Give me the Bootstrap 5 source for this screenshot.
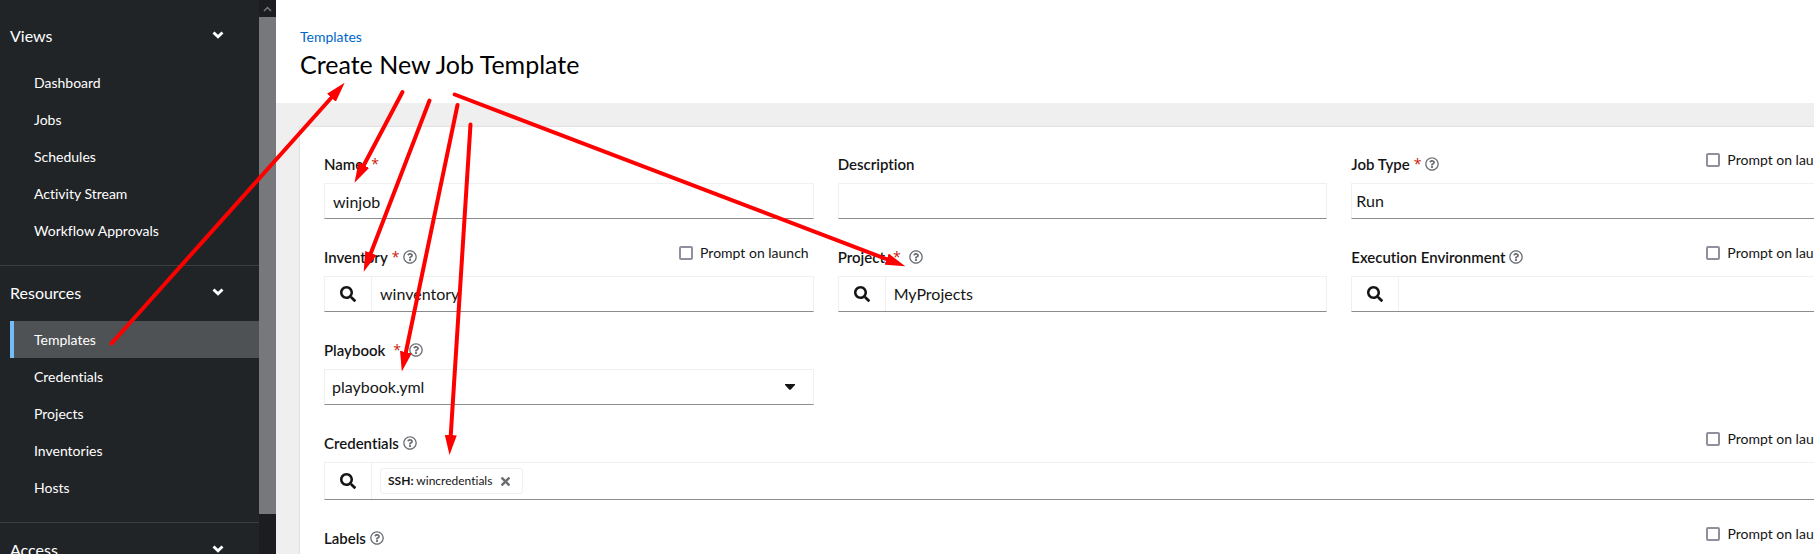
<!DOCTYPE html>
<html lang="en">
<head>
<meta charset="utf-8">
<meta name="viewport" content="width=device-width, initial-scale=1">
<title>Create New Job Template</title>
<link href="https://cdn.jsdelivr.net/npm/bootstrap@5.3.0/dist/css/bootstrap.min.css" rel="stylesheet">
<style>
body { font-family: Lato, "Open Sans", sans-serif; font-size: 14px; color: #151515; background: #fff; font-variant-ligatures: none; }
a { text-decoration: none; }
.icon { display: block; fill: currentColor; }

.sidebar { width: 259px; background: #212427; padding-top: 9px; }
.section { border-bottom: 1px solid #3c3f42; padding-bottom: 16px; }
.section-toggle { height: 55px; padding: 0 35px 2px 10px; font-size: 16px; color: #fff; background: none; border: 0; }
.section-toggle .icon { margin-bottom: 2px; }
.sidebar .nav-link { margin-left: 10px; padding: 0 0 0 24px; line-height: 37px; color: #fff; }
.sidebar .nav-link.active { background: #4f5255; border-left: 4px solid #73bcf7; padding-left: 20px; }

.scroller { width: 17px; background: #1b1d21; }
.scroller-up { height: 17px; color: #77787b; }
.scroller-thumb { height: calc(90% - 2px); background: #77787b; }

.page { margin-right: -75px; }
.page-head { padding: 26px 24px 23px; background: #fff; }
.crumb { line-height: 22px; color: #06c; }
.page-head h1 { font-size: 25px; line-height: 32px; font-weight: 400; color: #000; }
.page-body { background: #efefef; padding: 24px 24px 0; }
.panel { background: #fff; padding: 24px; box-shadow: 0 0 2px #c8c8c8; }
.form-grid { row-gap: 25px; }

.field-head { height: 32px; }
.field-head .title { font-size: 15px; line-height: 26px; font-weight: 600; color: #151515; }
.required { font-family: "Open Sans", sans-serif; font-size: 14px; line-height: 26px; color: #c9190b; margin-left: 4px; }
.help { color: #6a6e73; background: none; border: 0; padding: 0; margin-left: 4px; }
.prompt { gap: 7px; padding-right: 5px; line-height: 18px; }
.prompt .form-check-input { width: 14px; height: 14px; margin: 0; border: 2px solid #8f8f9d; border-radius: 2px; }

.box { height: 36px; border: 1px solid #f0f0f0; border-bottom-color: #8a8d90; border-radius: 0; font-size: 16px; color: #151515; background-color: #fff; }
input.box, .box input { padding: 0 8px; color: #151515; }
.box input { border: 0; font-size: 16px; outline: 0; min-width: 0; }
.lookup { width: 47px; border: 0; border-right: 1px solid #f0f0f0; background: none; color: #151515; }
.form-select.box { padding: 0 32px 0 7px; background-image: url("data:image/svg+xml,%3Csvg xmlns='http://www.w3.org/2000/svg' viewBox='0 0 10 6'%3E%3Cpath fill='%23151515' d='M0 0h10v1L5.600 5.700h-1.200L0 1z'/%3E%3C/svg%3E"); background-size: 10px 6px; background-position: right 18px center; }
.form-select.box-flush { padding-left: 4px; background-position: right 8px center; }
.box-tall { height: 38px; }
.chip { height: 26px; margin-left: 8px; padding: 0 12px 0 7px; border: 1px solid #f0f0f0; border-radius: 3px; font-size: 12px; }
.chip button { padding: 0; margin-left: 9px; border: 0; background: none; color: #6a6e73; }

.notes { left: 0; top: 0; pointer-events: none; z-index: 5; }
</style>
</head>
<body>
<svg width="0" height="0" class="position-absolute" aria-hidden="true">
  <symbol id="i-help" viewBox="0 0 512 512"><path d="M256 8C119.043 8 8 119.083 8 256c0 136.997 111.043 248 248 248s248-111.003 248-248C504 119.083 392.957 8 256 8zm0 448c-110.532 0-200-89.431-200-200 0-110.495 89.472-200 200-200 110.491 0 200 89.471 200 200 0 110.53-89.431 200-200 200zm107.244-255.2c0 67.052-72.421 68.084-72.421 92.863V300c0 6.627-5.373 12-12 12h-45.647c-6.627 0-12-5.373-12-12v-8.659c0-35.745 27.1-50.034 47.579-61.516 17.561-9.845 28.324-16.541 28.324-29.579 0-17.246-21.999-28.693-39.784-28.693-23.189 0-33.894 10.977-48.942 29.969-4.057 5.12-11.46 6.071-16.666 2.124l-27.824-21.098c-5.107-3.872-6.251-11.066-2.644-16.363C184.846 131.491 214.94 112 261.794 112c49.071 0 101.45 38.304 101.45 88.8zM298 368c0 23.159-18.841 42-42 42s-42-18.841-42-42 18.841-42 42-42 42 18.841 42 42z"/></symbol>
  <symbol id="i-search" viewBox="0 0 512 512"><path d="M505 442.7L405.3 343c-4.5-4.5-10.6-7-17-7H372c27.6-35.3 44-79.7 44-128C416 93.1 322.9 0 208 0S0 93.1 0 208s93.1 208 208 208c48.3 0 92.7-16.4 128-44v16.3c0 6.4 2.5 12.5 7 17l99.7 99.7c9.4 9.4 24.6 9.4 33.9 0l28.3-28.3c9.4-9.4 9.4-24.6.1-34zM208 336c-70.7 0-128-57.2-128-128 0-70.7 57.2-128 128-128 70.7 0 128 57.2 128 128 0 70.7-57.2 128-128 128z"/></symbol>
  <symbol id="i-times" viewBox="0 80 352 352"><path d="M242.72 256l100.07-100.07c12.28-12.28 12.28-32.19 0-44.48l-22.24-22.24c-12.28-12.28-32.19-12.28-44.48 0L176 189.28 75.93 89.21c-12.28-12.28-32.19-12.28-44.48 0L9.21 111.45c-12.28 12.28-12.28 32.19 0 44.48L109.28 256 9.21 356.07c-12.28 12.28-12.28 32.19 0 44.48l22.24 22.24c12.28 12.28 32.2 12.28 44.48 0L176 322.72l100.07 100.07c12.28 12.28 32.2 12.28 44.48 0l22.24-22.24c12.28-12.28 12.28-32.19 0-44.48L242.72 256z"/></symbol>
  <symbol id="i-chevron" viewBox="0 0 12 8"><path d="M1.500 1.500 6 5.700 10.500 1.500" fill="none" stroke="currentColor" stroke-width="2.900"/></symbol>
</svg>

<div class="d-flex vh-100 overflow-hidden position-relative">
  <nav class="sidebar flex-shrink-0 overflow-hidden" aria-label="Main">
    <div class="section">
      <button type="button" class="section-toggle d-flex w-100 align-items-center justify-content-between">Views<svg class="icon" width="12" height="8"><use href="#i-chevron"/></svg></button>
      <div class="nav flex-column">
        <a class="nav-link" href="#">Dashboard</a>
        <a class="nav-link" href="#">Jobs</a>
        <a class="nav-link" href="#">Schedules</a>
        <a class="nav-link" href="#">Activity Stream</a>
        <a class="nav-link" href="#">Workflow Approvals</a>
      </div>
    </div>
    <div class="section">
      <button type="button" class="section-toggle d-flex w-100 align-items-center justify-content-between">Resources<svg class="icon" width="12" height="8"><use href="#i-chevron"/></svg></button>
      <div class="nav flex-column">
        <a class="nav-link active" href="#" aria-current="page">Templates</a>
        <a class="nav-link" href="#">Credentials</a>
        <a class="nav-link" href="#">Projects</a>
        <a class="nav-link" href="#">Inventories</a>
        <a class="nav-link" href="#">Hosts</a>
      </div>
    </div>
    <button type="button" class="section-toggle d-flex w-100 align-items-center justify-content-between">Access<svg class="icon" width="12" height="8"><use href="#i-chevron"/></svg></button>
  </nav>
  <div class="scroller flex-shrink-0" aria-hidden="true">
    <div class="scroller-up d-flex align-items-center justify-content-center"><svg width="9" height="6" viewBox="0 0 9 6"><path d="M1 5 4.500 1.500 8 5" fill="none" stroke="currentColor" stroke-width="1.500"/></svg></div>
    <div class="scroller-thumb"></div>
  </div>

  <main class="flex-fill overflow-hidden">
    <div class="page h-100 d-flex flex-column">
      <header class="page-head flex-shrink-0">
        <a class="crumb d-block" href="#">Templates</a>
        <h1 class="m-0">Create New Job Template</h1>
      </header>
      <div class="page-body flex-fill d-flex flex-column">
        <form class="panel flex-fill">
          <div class="row form-grid">
            <div class="col-4">
              <div class="field-head d-flex"><label class="title" for="name">Name</label><span class="required ms-2">*</span></div>
              <input id="name" class="box form-control" value="winjob">
            </div>
            <div class="col-4">
              <div class="field-head d-flex"><label class="title" for="desc">Description</label></div>
              <input id="desc" class="box form-control">
            </div>
            <div class="col-4">
              <div class="field-head d-flex justify-content-between align-items-start">
                <div class="d-flex align-items-center"><label class="title" for="type">Job Type</label><span class="required">*</span><button type="button" class="help" aria-label="Help"><svg class="icon" width="14" height="14"><use href="#i-help"/></svg></button></div>
                <div class="prompt d-flex align-items-center"><input class="form-check-input" type="checkbox" id="p1"><label for="p1">Prompt on launch</label></div>
              </div>
              <select id="type" class="box box-flush form-select"><option>Run</option></select>
            </div>

            <div class="col-4">
              <div class="field-head d-flex justify-content-between align-items-start">
                <div class="d-flex align-items-center"><label class="title" for="inv">Inventory</label><span class="required">*</span><button type="button" class="help" aria-label="Help"><svg class="icon" width="14" height="14"><use href="#i-help"/></svg></button></div>
                <div class="prompt d-flex align-items-center"><input class="form-check-input" type="checkbox" id="p2"><label for="p2">Prompt on launch</label></div>
              </div>
              <div class="box d-flex"><button type="button" class="lookup d-flex align-items-center justify-content-center" aria-label="Search"><svg class="icon" width="16" height="16"><use href="#i-search"/></svg></button><input id="inv" class="flex-fill" value="winventory"></div>
            </div>
            <div class="col-4">
              <div class="field-head d-flex align-items-start">
                <div class="d-flex align-items-center"><label class="title" for="proj">Project</label><span class="required ms-2">*</span><button type="button" class="help ms-2" aria-label="Help"><svg class="icon" width="14" height="14"><use href="#i-help"/></svg></button></div>
              </div>
              <div class="box d-flex"><button type="button" class="lookup d-flex align-items-center justify-content-center" aria-label="Search"><svg class="icon" width="16" height="16"><use href="#i-search"/></svg></button><input id="proj" class="flex-fill" value="MyProjects"></div>
            </div>
            <div class="col-4">
              <div class="field-head d-flex justify-content-between align-items-start">
                <div class="d-flex align-items-center"><label class="title" for="ee">Execution Environment</label><button type="button" class="help" aria-label="Help"><svg class="icon" width="14" height="14"><use href="#i-help"/></svg></button></div>
                <div class="prompt d-flex align-items-center"><input class="form-check-input" type="checkbox" id="p3"><label for="p3">Prompt on launch</label></div>
              </div>
              <div class="box d-flex"><button type="button" class="lookup d-flex align-items-center justify-content-center" aria-label="Search"><svg class="icon" width="16" height="16"><use href="#i-search"/></svg></button><input id="ee" class="flex-fill"></div>
            </div>

            <div class="col-4">
              <div class="field-head d-flex align-items-start">
                <div class="d-flex align-items-center"><label class="title" for="book">Playbook</label><span class="required ms-2">*</span><button type="button" class="help ms-2" aria-label="Help"><svg class="icon" width="14" height="14"><use href="#i-help"/></svg></button></div>
              </div>
              <select id="book" class="box form-select"><option>playbook.yml</option></select>
            </div>

            <div class="col-12">
              <div class="field-head d-flex justify-content-between align-items-start">
                <div class="d-flex align-items-center"><label class="title" for="cred">Credentials</label><button type="button" class="help" aria-label="Help"><svg class="icon" width="14" height="14"><use href="#i-help"/></svg></button></div>
                <div class="prompt d-flex align-items-center"><input class="form-check-input" type="checkbox" id="p4"><label for="p4">Prompt on launch</label></div>
              </div>
              <div class="box box-tall d-flex align-items-center"><button type="button" id="cred" class="lookup h-100 d-flex align-items-center justify-content-center" aria-label="Search"><svg class="icon" width="16" height="16"><use href="#i-search"/></svg></button>
                <span class="chip d-flex align-items-center"><span><b>SSH:</b> wincredentials</span><button type="button" aria-label="Remove"><svg class="icon" width="9" height="9"><use href="#i-times"/></svg></button></span></div>
            </div>

            <div class="col-12">
              <div class="field-head d-flex justify-content-between align-items-start">
                <div class="d-flex align-items-center"><span class="title">Labels</span><button type="button" class="help" aria-label="Help"><svg class="icon" width="14" height="14"><use href="#i-help"/></svg></button></div>
                <div class="prompt d-flex align-items-center"><input class="form-check-input" type="checkbox" id="p5"><label for="p5">Prompt on launch</label></div>
              </div>
            </div>
          </div>
        </form>
      </div>
    </div>
  </main>

  <!-- Annotation arrows drawn over the form -->
  <svg class="notes position-absolute" width="920" height="470" aria-hidden="true">
    <defs><marker id="tip" markerUnits="userSpaceOnUse" markerWidth="20" markerHeight="12" refX="1" refY="6" orient="auto"><path d="M0 0 20 6 0 12z" fill="#f00"/></marker></defs>
    <g stroke="#f00" stroke-width="4" stroke-linecap="round">
      <path d="M111.500 343.500 332 97" marker-end="url(#tip)"/>
      <path d="M402.500 92 363.400 166" marker-end="url(#tip)"/>
      <path d="M429.500 100.500 370.500 254" marker-end="url(#tip)"/>
      <path d="M457.500 105 405.700 353" marker-end="url(#tip)"/>
      <path d="M470.500 124.500 450.700 436" marker-end="url(#tip)"/>
      <path d="M454.700 94.500 887.500 259.500" marker-end="url(#tip)"/>
    </g>
  </svg>
</div>
<script src="https://cdn.jsdelivr.net/npm/bootstrap@5.3.0/dist/js/bootstrap.bundle.min.js"></script>
</body>
</html>
